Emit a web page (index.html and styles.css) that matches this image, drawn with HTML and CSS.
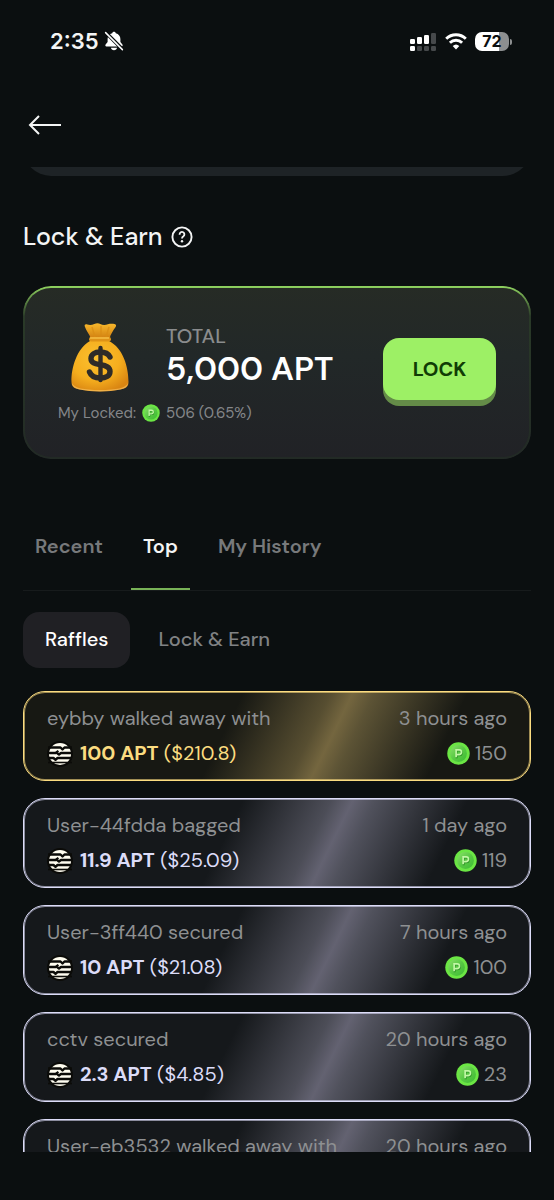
FILE: index.html
```
<!DOCTYPE html>
<html lang="en">
<head>
<meta charset="utf-8">
<meta name="viewport" content="width=device-width, initial-scale=1">
<title>Lock &amp; Earn</title>
<link rel="stylesheet" href="styles.css">
</head>
<body>
<svg class="defs" aria-hidden="true">
  <defs>
    <linearGradient id="coinFace" x1="0" y1="0" x2="1" y2="1">
      <stop offset="0" stop-color="#8be06a"/><stop offset=".5" stop-color="#58c944"/><stop offset="1" stop-color="#3dbb33"/>
    </linearGradient>
    <radialGradient id="bagBody" cx=".42" cy=".35" r=".7">
      <stop offset="0" stop-color="#fbc02f"/><stop offset=".6" stop-color="#f5ae1e"/><stop offset="1" stop-color="#d98512"/>
    </radialGradient>
    <linearGradient id="bagTop" x1="0" y1="0" x2="0" y2="1">
      <stop offset="0" stop-color="#f8b92c"/><stop offset="1" stop-color="#cf7d10"/>
    </linearGradient>
    <symbol id="coin" viewBox="0 0 24 24">
      <circle cx="12" cy="12" r="11.7" fill="#6be644"/>
      <circle cx="12" cy="12" r="8.8" fill="url(#coinFace)"/>
      <path d="M10 17V9h3a2.400 2.400 0 0 1 0 4.800H10" fill="none" stroke="#2a8f24" stroke-width="2"/>
      <path d="M9.500 16V8.300h3.200a2.400 2.400 0 0 1 0 4.800H9.500" fill="none" stroke="#c2f8a5" stroke-width="1.800"/>
    </symbol>
    <symbol id="apt" viewBox="0 0 26 26">
      <circle cx="13" cy="13" r="13" fill="#0b0b08"/>
      <circle cx="13" cy="13" r="11" fill="#fffdf0"/>
      <g fill="none" stroke="#0b0b08" stroke-width="2.400" stroke-linejoin="round">
        <path d="M1 6.500h12.500l2 2 2-2H25"/>
        <path d="M1 12h7.500l3-2M10 12l2 1.500L14 12h11"/>
        <path d="M1 17h5.500l2 1.800 2-1.800H25"/>
        <path d="M1 21.500h24" stroke-width="1.600"/>
      </g>
    </symbol>
  </defs>
</svg>

<div class="app">
  <header class="top">
    <div class="status">
      <div class="status-left">
        <span>2:35</span>
        <svg width="20" height="20" viewBox="0 0 20 20" aria-hidden="true">
          <path d="M10 .8c.9 0 1.600.6 1.800 1.400 2.900.8 4.600 3 4.600 5.700v3l2 2.600c.6.900.2 1.900-.8 1.900H2.400c-1 0-1.400-1-.8-1.900l2-2.600v-3c0-2.700 1.700-4.900 4.600-5.700C8.400 1.400 9.100.8 10 .8zM6.900 16.800h6.200c-.3 1.500-1.500 2.500-3.100 2.500s-2.800-1-3.100-2.500z" fill="#fff"/>
          <path d="M1.800 1.500l17 17.200" stroke="#0b0f10" stroke-width="3.600"/>
          <path d="M1.600 1.600l16.800 17" stroke="#fff" stroke-width="1.500" stroke-linecap="round"/>
        </svg>
      </div>
      <div class="status-right">
        <svg width="27" height="19" viewBox="0 0 27 19" aria-hidden="true">
          <g fill="#fff"><rect x="0" y="7" width="5" height="5" rx="1.200"/><rect x="7" y="5" width="5" height="7" rx="1.200"/><rect x="14" y="3" width="5" height="9" rx="1.200"/><rect x="0" y="14" width="5" height="5" rx="1.200"/></g>
          <g fill="#46494b"><rect x="21" y="1" width="5" height="11" rx="1.200"/><rect x="7" y="14" width="5" height="5" rx="1.200"/><rect x="14" y="14" width="5" height="5" rx="1.200"/><rect x="21" y="14" width="5" height="5" rx="1.200"/></g>
        </svg>
        <svg width="22" height="17" viewBox="0 0 22 17" aria-hidden="true">
          <g fill="none" stroke="#fff" stroke-width="2.900"><path d="M1.200 5.800a14 14 0 0 1 19.600 0"/><path d="M4.900 9.800a8.700 8.700 0 0 1 12.200 0"/></g>
          <path d="M11 16.500l-3.300-3.400a4.800 4.800 0 0 1 6.600 0z" fill="#fff"/>
        </svg>
        <div class="battery"><span>72</span></div>
      </div>
    </div>
    <button class="back" aria-label="Back">
      <svg width="34" height="20" viewBox="0 0 34 20" aria-hidden="true"><path d="M11 1L2 10l9 9M2 10h31" fill="none" stroke="#f4f5f5" stroke-width="2"/></svg>
    </button>
  </header>

  <main class="scroll">
    <div class="previous-card"></div>

    <h1 class="heading">Lock &amp; Earn
      <button class="help" aria-label="Help">
        <svg width="22" height="22" viewBox="0 0 22 22" aria-hidden="true"><circle cx="11" cy="11" r="9.600" fill="none" stroke="#f4f5f5" stroke-width="1.900"/><path d="M8.600 8.800V8.300a2.400 2.400 0 1 1 3.800 2c-.9.600-1.400 1-1.400 2.300" fill="none" stroke="#f4f5f5" stroke-width="1.800"/><circle cx="11" cy="15.300" r="1.200" fill="#f4f5f5"/></svg>
      </button>
    </h1>

    <section class="lock-card">
      <div class="lock-info">
        <div class="lock-main">
          <svg class="bag" width="60" height="70" viewBox="0 0 60 70" aria-hidden="true">
            <path d="M20 19C7 26 1 46 1.500 60c.1 5 3 6.500 8 7.500 12 2.500 29 2.500 41 0 5-1 8-2.500 8-7.500C58.500 45 53 26 39 19z" fill="url(#bagBody)"/>
            <path d="M2 61c2 5 12 7 28 7s26-2 28-7c-.4 4-3 5.500-7.500 6.500-12 2.500-29 2.500-41 0C5 66.500 2.400 65 2 61z" fill="#ffd37a" opacity=".5"/>
            <path d="M21 17c-1.500-5-5-8.500-6.200-12.500-.6-2 .8-2.700 2.500-2 2.500.8 4.700.5 7-.6 2-1 4.400-1 6 0 2.400 1.300 5 1.200 7.600.3 2.800-.9 5-.5 6.600-.2 1.700.3 2 1.500 1.100 3C43 9 40.500 12 39.500 17z" fill="url(#bagTop)"/>
            <path d="M22 5l3 10M31 4v11M39 5l-3 10" stroke="#d98b14" stroke-width="1.500" fill="none" opacity=".7"/>
            <rect x="19" y="15" width="22" height="4.500" rx="2.200" fill="#df9317"/>
            <path d="M20 16h19" stroke="#ffd15c" stroke-width="1"/>
            <path d="M40 35c-2-4-6-5-10-5-5 0-9 2.200-9 6.500 0 4.800 4.500 5.300 9.500 6.200 5.500 1 9.500 2.300 9.500 6.800 0 4.600-4.500 6.500-9.500 6.500-5.500 0-9.500-2-11-6" fill="none" stroke="#2e2b28" stroke-width="5.400" stroke-linecap="round"/>
            <path d="M30.500 26v32" stroke="#2e2b28" stroke-width="4.400" stroke-linecap="round"/>
          </svg>
          <div>
            <div class="total-label">TOTAL</div>
            <div class="total-value">5,000 APT</div>
          </div>
        </div>
        <div class="my-locked">My Locked: <svg width="18" height="18" aria-hidden="true"><use href="#coin"/></svg> 506 (0.65%)</div>
      </div>
      <button class="lock-button">LOCK</button>
    </section>

    <nav class="tabs">
      <button class="tab">Recent</button>
      <button class="tab active">Top</button>
      <button class="tab">My History</button>
    </nav>
    <div class="filters">
      <button class="filter active">Raffles</button>
      <button class="filter">Lock &amp; Earn</button>
    </div>

    <ul class="wins">
      <li class="win gold">
        <div class="line"><span>eybby walked away with</span><span>3 hours ago</span></div>
        <div class="line"><span class="prize"><svg width="26" height="26" aria-hidden="true"><use href="#apt"/></svg><span><b>100 APT</b> ($210.8)</span></span><span class="points"><svg width="23" height="23" aria-hidden="true"><use href="#coin"/></svg>150</span></div>
      </li>
      <li class="win">
        <div class="line"><span>User-44fdda bagged</span><span>1 day ago</span></div>
        <div class="line"><span class="prize"><svg width="26" height="26" aria-hidden="true"><use href="#apt"/></svg><span><b>11.9 APT</b> ($25.09)</span></span><span class="points"><svg width="23" height="23" aria-hidden="true"><use href="#coin"/></svg>119</span></div>
      </li>
      <li class="win">
        <div class="line"><span>User-3ff440 secured</span><span>7 hours ago</span></div>
        <div class="line"><span class="prize"><svg width="26" height="26" aria-hidden="true"><use href="#apt"/></svg><span><b>10 APT</b> ($21.08)</span></span><span class="points"><svg width="23" height="23" aria-hidden="true"><use href="#coin"/></svg>100</span></div>
      </li>
      <li class="win">
        <div class="line"><span>cctv secured</span><span>20 hours ago</span></div>
        <div class="line"><span class="prize"><svg width="26" height="26" aria-hidden="true"><use href="#apt"/></svg><span><b>2.3 APT</b> ($4.85)</span></span><span class="points"><svg width="23" height="23" aria-hidden="true"><use href="#coin"/></svg>23</span></div>
      </li>
      <li class="win">
        <div class="line"><span>User-eb3532 walked away with</span><span>20 hours ago</span></div>
      </li>
    </ul>
  </main>
</div>
</body>
</html>
```
FILE: styles.css
```
* { box-sizing: border-box; }
body {
  margin: 0;
  background: #0b0f10;
  color: #f4f5f5;
  font-family: "DM Sans", Inter, "Liberation Sans", sans-serif;
}
button {
  border: 0;
  padding: 0;
  background: none;
  color: inherit;
  font: inherit;
  cursor: pointer;
}
svg { display: block; flex: none; }
.defs { position: absolute; width: 0; height: 0; }

.app {
  display: flex;
  flex-direction: column;
  height: 100vh;
  padding-bottom: 48px;
}
.top { flex: none; padding: 26px 45px 32px 28px; }
.status {
  display: flex;
  justify-content: space-between;
  align-items: center;
  height: 30px;
  padding-left: 22px;
  font-family: Inter, "Liberation Sans", sans-serif;
}
.status-left, .status-right { display: flex; align-items: center; }
.status-left { gap: 5px; font-size: 22px; font-weight: 600; }
.status-right { gap: 8px; }
.battery {
  position: relative;
  width: 34px;
  height: 19px;
  border-radius: 7px;
  background: linear-gradient(90deg, #fff 72%, #8d8f90 72%);
  color: #0b0f10;
  font-size: 16px;
  font-weight: 700;
  line-height: 19px;
  text-align: center;
}
.battery::after {
  content: "";
  position: absolute;
  right: -3px;
  top: 7px;
  width: 2px;
  height: 6px;
  border-radius: 0 2px 2px 0;
  background: #8d8f90;
}
.back { display: block; margin-top: 59px; }

.scroll {
  flex: 1;
  min-height: 0;
  overflow-y: auto;
  scrollbar-width: none;
  padding: 0 23px;
}
.previous-card {
  height: 60px;
  margin-top: -51px;
  border-radius: 28px;
  background: #1e2326;
}
.heading {
  display: flex;
  align-items: center;
  gap: 8px;
  margin: 45px 0 33px;
  font-size: 25px;
  font-weight: 500;
  line-height: 32px;
}

.lock-card {
  position: relative;
  display: flex;
  align-items: center;
  justify-content: space-between;
  padding: 36px 35px 34px;
  border-radius: 28px;
  background: linear-gradient(#262b25, #222828 40%, #212226);
}
.lock-card::before {
  content: "";
  position: absolute;
  inset: 0;
  padding: 2px;
  border-radius: inherit;
  background: linear-gradient(#8fd35f, #2a3a28 30px, #222a25);
  mask: linear-gradient(#000 0 0) content-box exclude, linear-gradient(#000 0 0);
  pointer-events: none;
}
.lock-main { display: flex; align-items: center; gap: 36px; padding-left: 12px; }
.total-label { color: #8a8c8d; font-size: 20px; font-weight: 500; line-height: 24px; }
.total-value { color: #fff; font-size: 33px; font-weight: 600; line-height: 42px; white-space: nowrap; }
.my-locked {
  display: flex;
  align-items: center;
  gap: 6px;
  margin-top: 9px;
  color: #85878a;
  font-size: 15px;
  line-height: 24px;
}
.lock-button {
  width: 113px;
  height: 62px;
  margin-bottom: 10px;
  border-radius: 16px;
  background: #9df065;
  box-shadow: 0 6px #648c48;
  color: #103c05;
  font-size: 20px;
  font-weight: 700;
}

.tabs {
  display: flex;
  gap: 16px;
  margin-top: 44px;
  border-bottom: 1px solid #171b1c;
}
.tab {
  height: 87px;
  padding: 0 12px;
  border-bottom: 2px solid transparent;
  color: #77797b;
  font-size: 20px;
  font-weight: 600;
}
.tab.active { border-color: #78b257; color: #f4f5f5; }
.filters { display: flex; gap: 6px; margin-top: 21px; }
.filter {
  height: 56px;
  padding: 0 22px 2px;
  border-radius: 16px;
  color: #808284;
  font-size: 20px;
  font-weight: 500;
}
.filter.active { background: #202024; color: #fff; }

.wins {
  display: grid;
  gap: 17px;
  margin: 23px 0 0;
  padding: 0 0 17px;
  list-style: none;
}
.win {
  --tone: #dcdcf8;
  --edge: #dcdcf899;
  --base: #15181b;
  min-height: 90px;
  padding: 9px 23px;
  border: 1px solid var(--tone);
  border-radius: 22px;
  background: linear-gradient(116deg, var(--base) 40%, #4c4d57 56%, #636271 60%, #50515c 64%, var(--base) 81%);
  box-shadow: inset 0 0 0 1px var(--edge);
}
.win.gold {
  --tone: #fbdc80;
  --edge: #fbdc8099;
  --base: #171813;
  background: linear-gradient(116deg, var(--base) 40%, #574e31 56%, #74663f 60%, #5c5335 64%, var(--base) 81%);
}
.line {
  display: flex;
  justify-content: space-between;
  align-items: center;
  color: #8e9092;
  font-size: 20px;
  line-height: 35px;
  white-space: nowrap;
}
.prize, .points { display: flex; align-items: center; }
.prize { gap: 7px; color: var(--tone); }
.prize b { font-weight: 700; }
.points { gap: 5px; }
```
